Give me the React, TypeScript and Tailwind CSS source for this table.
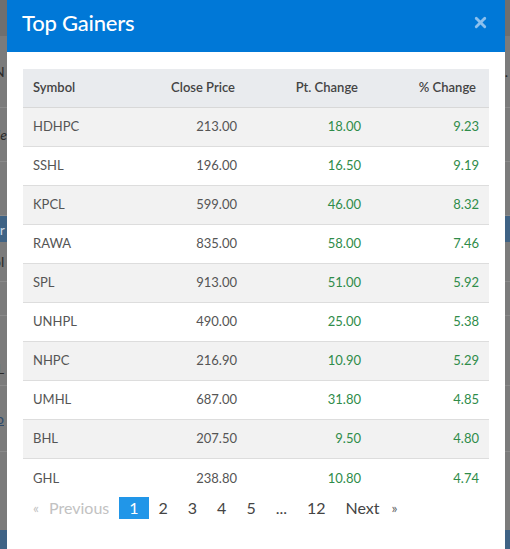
import { X } from "lucide-react";

type Row = { symbol: string; close: string; pt: string; pct: string };

const ROWS: Row[] = [
  { symbol: "HDHPC", close: "213.00", pt: "18.00", pct: "9.23" },
  { symbol: "SSHL", close: "196.00", pt: "16.50", pct: "9.19" },
  { symbol: "KPCL", close: "599.00", pt: "46.00", pct: "8.32" },
  { symbol: "RAWA", close: "835.00", pt: "58.00", pct: "7.46" },
  { symbol: "SPL", close: "913.00", pt: "51.00", pct: "5.92" },
  { symbol: "UNHPL", close: "490.00", pt: "25.00", pct: "5.38" },
  { symbol: "NHPC", close: "216.90", pt: "10.90", pct: "5.29" },
  { symbol: "UMHL", close: "687.00", pt: "31.80", pct: "4.85" },
  { symbol: "BHL", close: "207.50", pt: "9.50", pct: "4.80" },
  { symbol: "GHL", close: "238.80", pt: "10.80", pct: "4.74" },
];

const PAGES = ["2", "3", "4", "5", "...", "12"];

// dimmed page that peeks out on both sides of the modal
function Backdrop() {
  return (
    <div className="flex flex-col w-full h-full bg-[#7b7b7b] text-[14px] text-[#2a2a2a]">
      <div className="h-[36px] bg-[#6f6f6f] shrink-0" />
      <div className="h-[72px] border-b border-[#8a8a8a] flex items-center shrink-0">
        <span className="-ml-[6px]">N</span>
        <span className="ml-auto mr-[2px] text-[#222]">.</span>
      </div>
      <div className="h-[54px] border-b border-[#8a8a8a] flex items-center shrink-0">
        <span className="-ml-[3px] italic">le</span>
      </div>
      <div className="h-[54px] border-b border-[#8a8a8a] shrink-0" />
      <div className="h-[26px] bg-[#3f6385] flex items-center shrink-0 text-[#c9d6e2]">
        <span className="-ml-[8px]">ur</span>
      </div>
      <div className="h-[40px] border-b border-[#8a8a8a] flex items-center shrink-0">
        <span className="-ml-[7px]">ol</span>
      </div>
      <div className="h-[34px] border-b border-[#8a8a8a] shrink-0" />
      <div className="h-[70px] border-b border-[#8a8a8a] flex items-center shrink-0">
        <span className="-ml-[3px] mt-[36px]">L</span>
      </div>
      <div className="h-[66px] border-b border-[#8a8a8a] flex items-center shrink-0">
        <span className="-ml-[4px] underline text-[#2c4a6b]">o</span>
      </div>
      <div className="flex-1" />
      <div className="h-[19px] bg-[#3f6385] shrink-0" />
    </div>
  );
}

export default function App() {
  return (
    <div className="relative w-[510px] h-[549px] overflow-hidden font-['Lato',sans-serif]">
      <Backdrop />

      <div className="absolute left-[7px] top-0 w-[498px] h-[549px] bg-white flex flex-col">
        <div className="h-[52px] bg-[#0078d7] flex items-center pl-[15px] pr-[16px] pb-[8px] shrink-0">
          <h2 className="text-white text-[22px] font-medium tracking-[-0.2px]">Top Gainers</h2>
          <button className="ml-auto text-[#8cc0ee]" aria-label="Close">
            <X className="w-[17px] h-[17px]" strokeWidth={4} />
          </button>
        </div>

        <div className="px-[16px] pt-[17px]">
          <div className="text-[13px]">
            <div className="grid grid-cols-[124px_100px_124px_118px] h-[39px] items-center bg-[#e9ebee] border-b border-[#d8d8d8] text-[#444] font-semibold">
              <div className="pl-[10px]">Symbol</div>
              <div className="text-right pr-[12px]">Close Price</div>
              <div className="text-right pr-[13px]">Pt. Change</div>
              <div className="text-right pr-[13px]">% Change</div>
            </div>
            {ROWS.map((r, i) => (
              <div
                key={r.symbol}
                className={`grid grid-cols-[124px_100px_124px_118px] h-[39px] items-center text-[#555] ${
                  i % 2 === 0 ? "bg-[#f2f2f2]" : "bg-white"
                } ${i < ROWS.length - 1 ? "border-b border-[#dddddd]" : ""}`}
              >
                <div className="pl-[10px]">{r.symbol}</div>
                <div className="text-right pr-[10px]">{r.close}</div>
                <div className="text-right pr-[10px] text-[#2f8c4a]">{r.pt}</div>
                <div className="text-right pr-[10px] text-[#2f8c4a]">{r.pct}</div>
              </div>
            ))}
          </div>

          <div className="flex items-center h-[22px] -mt-[1px] pl-[10px] text-[16px] leading-[22px] text-[#444]">
            <span className="text-[#c2c2c2] text-[14px]">«</span>
            <span className="px-[10px] text-[#c2c2c2]">Previous</span>
            <span className="px-[10px] bg-[#2196e8] text-white">1</span>
            {PAGES.map((p) => (
              <span key={p} className="px-[10px]">
                {p}
              </span>
            ))}
            <span className="px-[10px] pr-[12px]">Next</span>
            <span className="text-[14px] text-[#666]">»</span>
          </div>
        </div>
      </div>
    </div>
  );
}
